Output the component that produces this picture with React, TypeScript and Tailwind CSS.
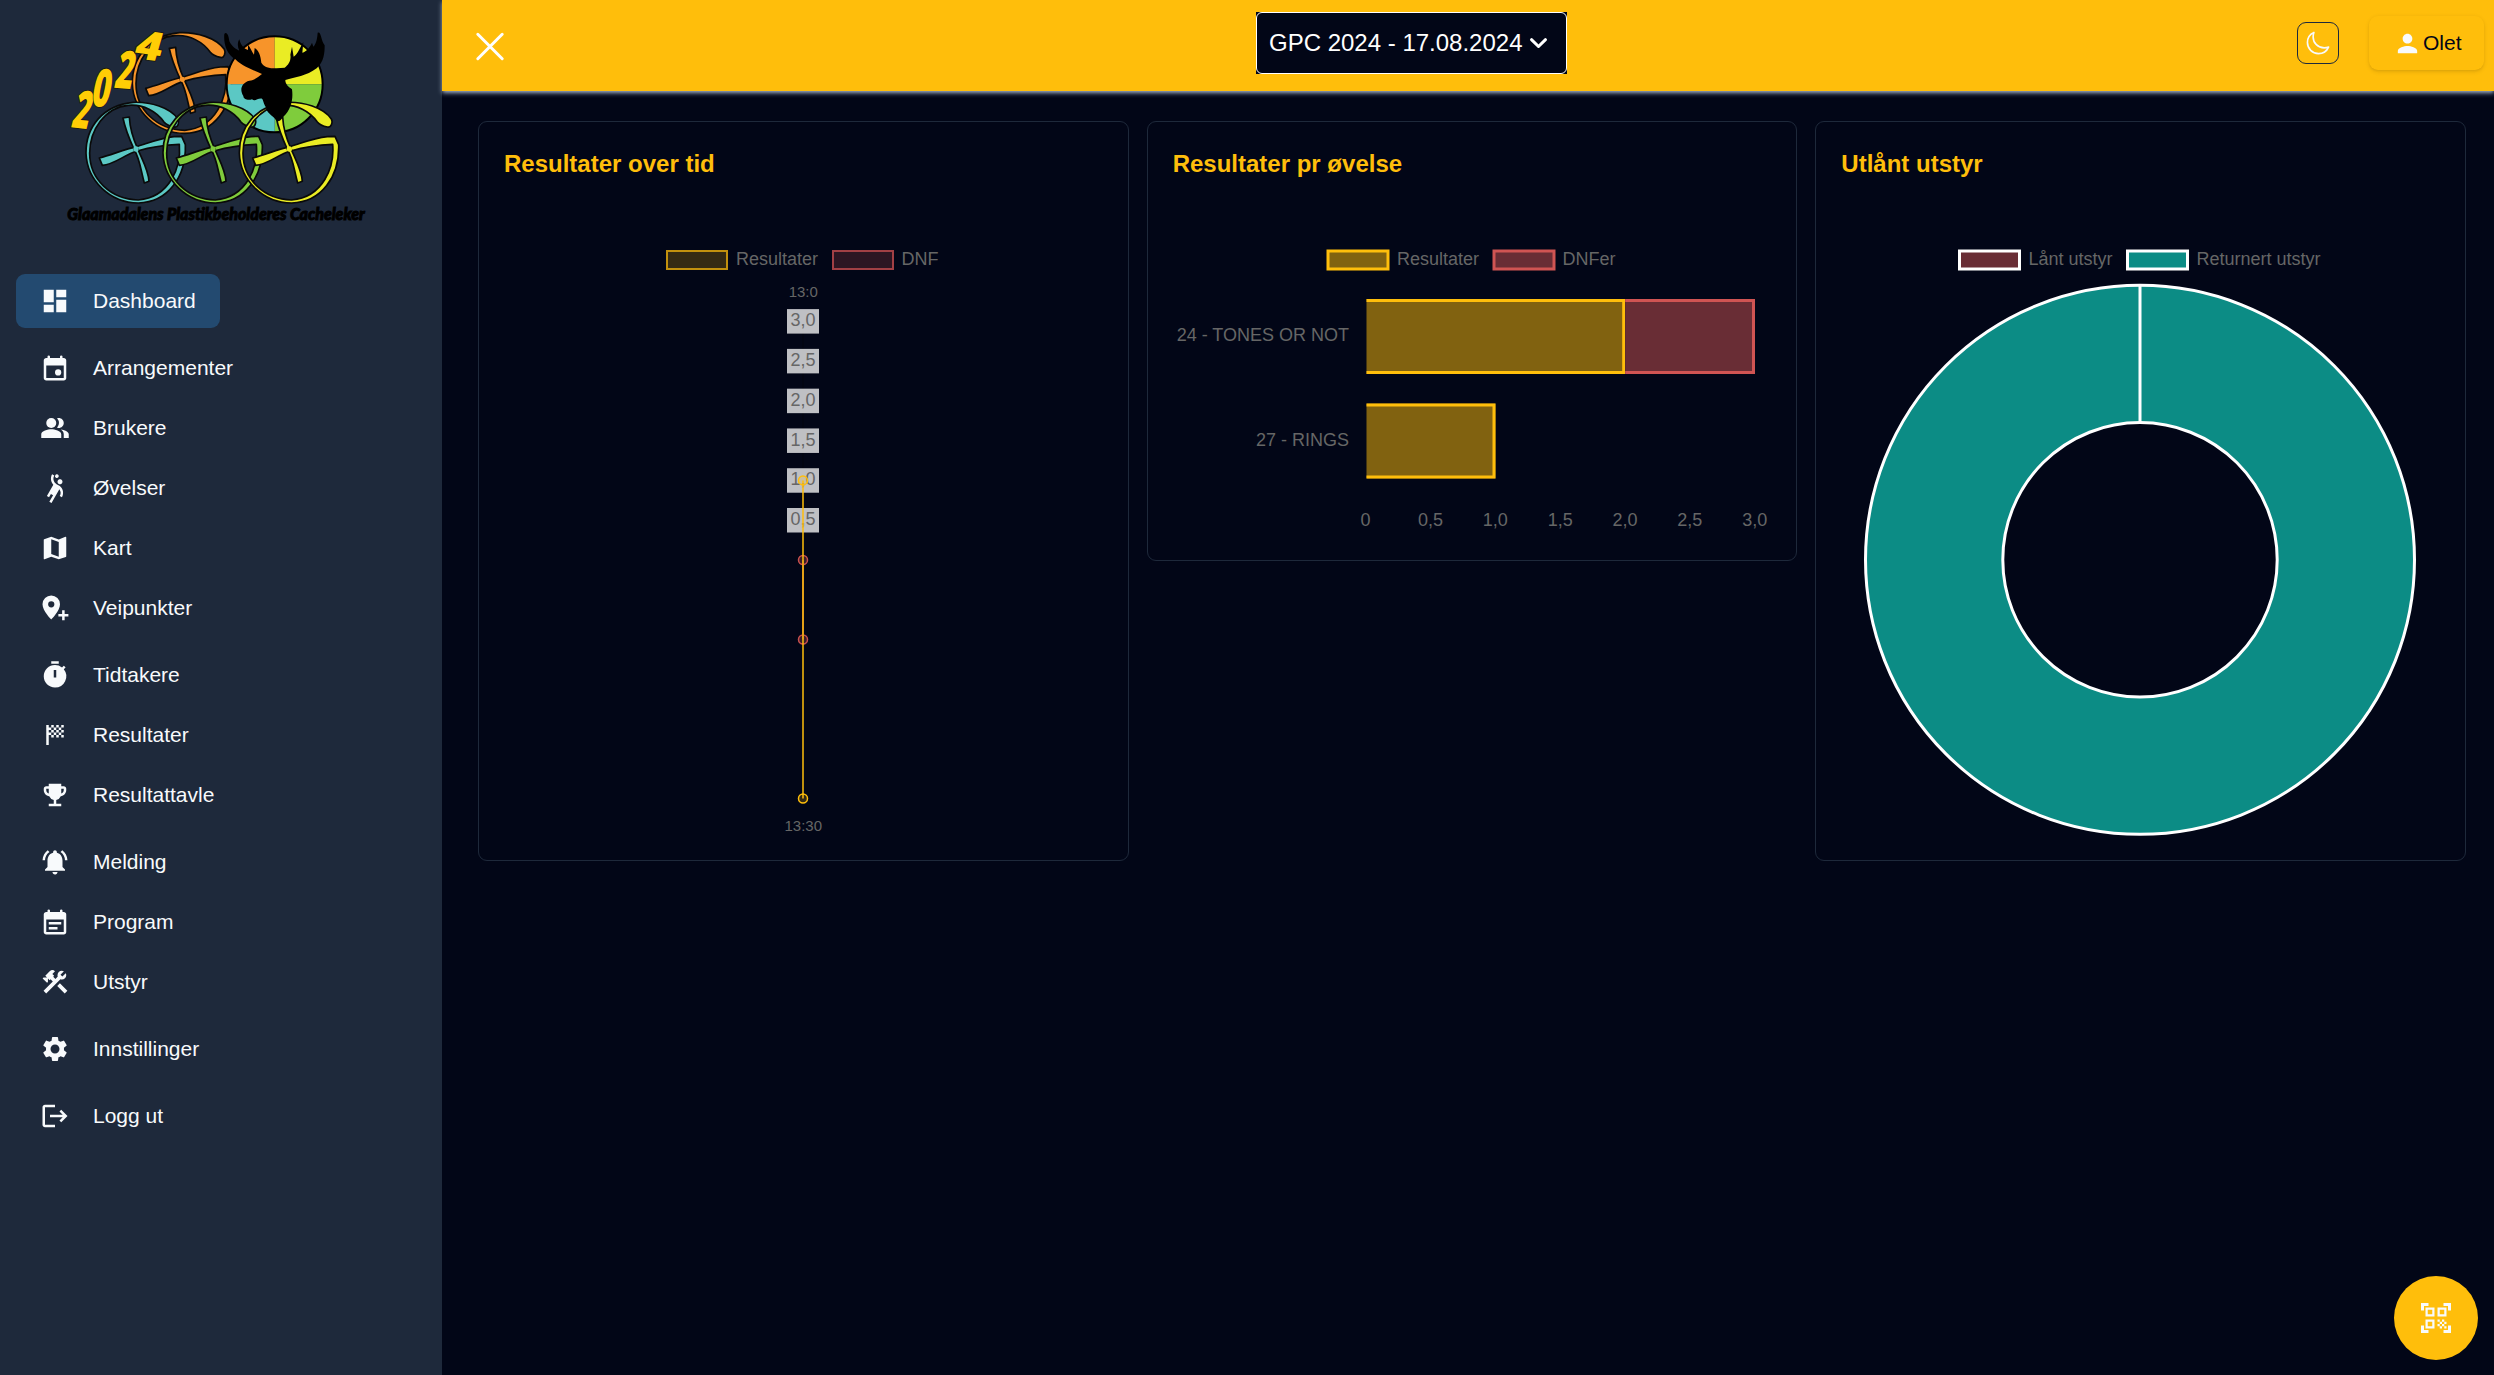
import React from "react";
import {
  MdConstruction,
  MdDashboard,
  MdEmojiEvents,
  MdLogout,
  MdMap,
  MdNotificationsActive,
  MdPeopleAlt,
  MdPerson,
  MdQrCodeScanner,
  MdSettings,
  MdSportsHandball,
  MdSportsScore,
  MdTimer,
} from "react-icons/md";

const ARIAL = '"Liberation Sans", Arial, sans-serif';

function EventIcon({ note = false }: { note?: boolean }) {
  return (
    <svg viewBox="0 0 24 24" width="30" height="30" fill="currentColor">
      <path
        fillRule="evenodd"
        d="M5 22q-.825 0-1.412-.587T3 20V6q0-.825.588-1.412T5 4h1V3q0-.425.288-.712T7 2t.713.288T8 3v1h8V3q0-.425.288-.712T17 2t.713.288T18 3v1h1q.825 0 1.413.588T21 6v14q0 .825-.587 1.413T19 22zm0-2h14V10H5z"
      />
      {note ? <path d="M7 12h10v2H7zM7 16h7v2H7z" /> : <circle cx="14.5" cy="15.5" r="2.5" />}
    </svg>
  );
}

function PinPlusIcon() {
  return (
    <svg viewBox="0 0 24 24" width="30" height="30" fill="currentColor">
      <path
        fillRule="evenodd"
        d="M9 2a7 7 0 0 0-7 7c0 5.2 7 12.2 7 12.2S16 14.200 16 9a7 7 0 0 0-7-7zm0 9.500a2.500 2.500 0 1 1 0-5 2.500 2.500 0 0 1 0 5z"
      />
      <path d="M17.700 13.800h2v3h3v2h-3v3h-2v-3h-3v-2h3z" />
    </svg>
  );
}

type Item = { label: string; icon: React.ReactNode; active?: boolean };

const groups: Item[][] = [
  [{ label: "Dashboard", icon: <MdDashboard size={30} />, active: true }],
  [
    { label: "Arrangementer", icon: <EventIcon /> },
    { label: "Brukere", icon: <MdPeopleAlt size={30} /> },
    { label: "Øvelser", icon: <MdSportsHandball size={30} /> },
    { label: "Kart", icon: <MdMap size={30} /> },
    { label: "Veipunkter", icon: <PinPlusIcon /> },
  ],
  [
    { label: "Tidtakere", icon: <MdTimer size={30} /> },
    { label: "Resultater", icon: <MdSportsScore size={30} /> },
    { label: "Resultattavle", icon: <MdEmojiEvents size={30} /> },
  ],
  [
    { label: "Melding", icon: <MdNotificationsActive size={30} /> },
    { label: "Program", icon: <EventIcon note /> },
    { label: "Utstyr", icon: <MdConstruction size={30} /> },
  ],
  [{ label: "Innstillinger", icon: <MdSettings size={30} /> }],
  [{ label: "Logg ut", icon: <MdLogout size={30} /> }],
];

const RING =
  "M372 321 C384 325 389 306 384 297 C360 262 300 245 250 247 C160 255 107 320 108 400 C111 482 180 549 265 549 C354 547 409 470 406 374 L395 349 L372 350 C330 354 294 370 260 380 C225 388 190 402 148 414 L157 436 C194 434 222 404 262 393 C300 382 340 375 388 373 C394 440 360 532 265 540 C182 538 119 478 119 400 C119 330 165 262 235 256 C280 252 320 275 342 306 C350 316 362 319 372 321 Z";
const STEM =
  "M219 294 L238 291 C240 330 252 362 263 386 C276 418 296 452 297 484 L283 489 C272 450 270 418 253 390 C242 366 226 330 219 294 Z";

function Letter({ x, y, color }: { x: number; y: number; color: string }) {
  return (
    <g transform={`translate(${x} ${y})`} fill={color} stroke="#0a0a0a" strokeWidth="5" strokeLinejoin="round">
      <path d={RING} />
      <path d={STEM} />
      <circle cx="258" cy="387" r="8" stroke="none" />
    </g>
  );
}

const DIGITS = [
  { c: "2", x: 61, y: 322, r: 6, s: 158, w: 52 },
  { c: "0", x: 119, y: 258, r: 3, s: 158, w: 56 },
  { c: "2", x: 190, y: 203, r: 4, s: 158, w: 54 },
  { c: "4", x: 248, y: 113, r: 8, s: 120, w: 80 },
];

function Logo() {
  return (
    <svg viewBox="0 0 990 660" width="330" height="220" className="overflow-visible">
      <Letter x={139} y={-209} color="#f7942a" />
      <g>
        <path d="M674 193 V49 A144 144 0 0 0 530 193 Z" fill="#f7942a" />
        <path d="M674 193 V49 A144 144 0 0 1 818 193 Z" fill="#eaec24" />
        <path d="M674 193 V337 A144 144 0 0 0 818 193 Z" fill="#7fcc3c" />
        <path d="M674 193 V337 A144 144 0 0 1 530 193 Z" fill="#5bc8c4" />
        <circle cx="674" cy="193" r="144" fill="none" stroke="#000" strokeWidth="6" />
      </g>
      <Letter x={0} y={0} color="#5bc8c4" />
      <Letter x={231} y={0} color="#7fcc3c" />
      <Letter x={460} y={0} color="#eaec24" />
      <path
        d="M636 162 C612 150 580 142 556 118 C530 104 520 70 523 42 C528 34 536 42 538 64 C546 80 558 88 568 92 C562 80 562 68 568 58 C572 74 580 86 594 90 L594 74 C602 84 606 96 612 104 L614 84 C626 90 632 108 634 128 C642 142 655 145 680 145 L704 143 C716 134 724 120 721 104 L726 80 L731 110 C744 102 750 82 760 66 L757 98 C770 94 780 82 786 68 L790 80 C800 70 802 52 803 38 C814 34 812 60 824 76 C824 100 822 125 800 145 C770 168 735 172 706 180 C706 194 716 200 726 208 C730 236 724 268 700 290 C690 306 682 306 678 300 C665 284 650 280 648 262 C640 250 640 240 636 236 C622 234 616 246 606 238 C594 242 580 238 580 228 C568 210 574 188 598 182 C614 180 624 172 636 162 Z"
        fill="#000"
      />
      {DIGITS.map((d, i) => (
        <text
          key={i}
          transform={`translate(${d.x} ${d.y}) rotate(${d.r}) skewX(-8)`}
          fontFamily='"Open Sans", "Liberation Sans", sans-serif'
          fontWeight="800"
          fontSize={d.s}
          textLength={d.w}
          lengthAdjust="spacingAndGlyphs"
          fill="#ffcd05"
          stroke="#1a1a10"
          strokeWidth="5"
          paintOrder="stroke"
        >
          {d.c}
        </text>
      ))}
      <text
        x="52"
        y="599"
        fontFamily='Lato, "Liberation Sans", sans-serif'
        fontWeight="900"
        fontStyle="italic"
        fontSize="52"
        textLength="892"
        lengthAdjust="spacingAndGlyphs"
        fill="#000"
        stroke="#000"
        strokeWidth="3"
      >
        Glaamadalens Plastikbeholderes Cacheleker
      </text>
    </svg>
  );
}

function Sidebar() {
  return (
    <aside className="flex w-[442px] shrink-0 flex-col bg-[#1e293b] pt-5">
      <div className="mb-[34px] ml-[50px]">
        <Logo />
      </div>
      <nav className="flex flex-col gap-[13px] pl-4">
        {groups.map((g, i) => (
          <div key={i} className="flex flex-col items-start gap-1.5">
            {g.map((it) => (
              <a
                key={it.label}
                className={`flex h-[54px] items-center rounded-[9px] pr-6 pl-[23.5px] text-[21px] text-slate-50 ${
                  it.active ? "bg-[#234a70]" : ""
                }`}
              >
                <span className="mr-[23.5px] pb-px">{it.icon}</span>
                {it.label}
              </a>
            ))}
          </div>
        ))}
      </nav>
    </aside>
  );
}

function Header() {
  return (
    <header className="relative grid h-[91px] grid-cols-3 bg-[#ffbe0b] shadow-[0_1.5px_4.5px_#94a3b8,0_1.5px_3px_-1.5px_#94a3b8]">
      <div className="pt-[31px] pl-[33px]">
        <svg width="31" height="31" viewBox="0 0 31 31" stroke="#fff" strokeWidth="3" strokeLinecap="round">
          <path d="M2.800 3.300 L27.200 27.700 M27.200 3.300 L2.800 27.700" />
        </svg>
      </div>
      <div className="flex justify-center pt-3">
        <div className="mr-[113px] h-[62px] w-[311px] bg-[#020617]">
          <div className="flex h-full items-center rounded-md border border-white pb-px pl-3 text-2xl whitespace-nowrap text-white">
            GPC 2024 - 17.08.2024
            <svg className="ml-1.5" width="19" height="19" viewBox="0 0 19 19" fill="none" stroke="#fff" strokeWidth="3" strokeLinecap="round" strokeLinejoin="round">
              <path d="M2.500 6.700 L9.500 13.500 L16.500 6.700" />
            </svg>
          </div>
        </div>
      </div>
      <div className="flex justify-end pt-4 pr-2.5">
        <div className="mt-1.5 mr-[30px] flex size-[42px] items-center justify-center rounded-[9px] border border-slate-800">
          <svg width="26" height="26" viewBox="0 0 512 512" fill="none" stroke="#f8fafc" strokeWidth="32" strokeLinejoin="round" strokeLinecap="round">
            <path d="M160 136c0-30.620 4.510-61.610 16-88C99.570 81.270 48 159.320 48 248c0 119.290 96.710 216 216 216 88.680 0 166.730-51.570 200-128-26.390 11.490-57.380 16-88 16-119.290 0-216-96.710-216-216z" />
          </svg>
        </div>
        <div className="flex h-[54px] w-[115px] items-center rounded-[9px] pl-6 text-[21px] text-slate-950 shadow-[0_1.5px_4.5px_rgba(0,0,0,0.1),0_1.5px_3px_-1.500px_rgba(0,0,0,0.1)]">
          <MdPerson size={29} color="#f8fafc" className="mr-px" />
          Olet
        </div>
      </div>
    </header>
  );
}

function Card({ title, children }: { title: string; children: React.ReactNode }) {
  return (
    <section className="rounded-[9px] border border-[#1e293b]">
      <h2 className="mt-[26px] ml-[25px] text-2xl leading-8 font-bold text-[#ffbe0b]">{title}</h2>
      {children}
    </section>
  );
}

type KeyProps = {
  x: number;
  tx: number;
  label: string;
  fill: string;
  stroke: string;
  w?: number;
};

function LegendKey({ x, tx, label, fill, stroke, w = 3 }: KeyProps) {
  return (
    <g>
      <rect x={x} y="71" width="60" height="18" fill={fill} stroke={stroke} strokeWidth={w} />
      <text x={tx} y="85" fill="#666">
        {label}
      </text>
    </g>
  );
}

/* The radial scale has a single axis, so both series collapse on one vertical line. */
function RadarChart() {
  const ticks = ["3,0", "2,5", "2,0", "1,5", "1,0", "0,5"];
  return (
    <svg width="649" height="680" viewBox="479 180 649 680" className="block" fontFamily={ARIAL} fontSize="18">
      <g transform="translate(0 180)">
        <LegendKey x={667} tx={736} label="Resultater" fill="#352a13" stroke="#c2900e" w={2} />
        <LegendKey x={833} tx={901.5} label="DNF" fill="#2d1623" stroke="#a24045" w={2} />
      </g>
      <text x="803.300" y="296.500" fontSize="15" textAnchor="middle" fill="#666">
        13:0
      </text>
      <text x="803.300" y="831" fontSize="15" textAnchor="middle" fill="#666">
        13:30
      </text>
      <path d="M803 321 V560" stroke="#02050f" />
      {ticks.map((t, i) => (
        <g key={t}>
          <rect x="787" y={309.1 + i * 39.78} width="32" height="24.500" fill="#fff" fillOpacity=".75" />
          <text x="803" y={326.3 + i * 39.78} textAnchor="middle" fill="#666">
            {t}
          </text>
        </g>
      ))}
      <g fill="#3a1c28" stroke="#c9504f" strokeWidth="1.500">
        <circle cx="803" cy="560" r="4.500" />
        <circle cx="803" cy="639.500" r="4.500" />
      </g>
      <g fill="#ffbe0b" fillOpacity=".2" stroke="#ffbe0b" strokeWidth="1.500">
        <circle cx="803" cy="480.400" r="4.500" />
        <circle cx="803" cy="798.500" r="4.500" />
      </g>
      <path d="M803 480.400 V798.500" stroke="#ffbe0b" strokeOpacity=".75" strokeWidth="2" />
      <path d="M803 560 V639.500" stroke="#e5a016" strokeWidth="2" />
    </svg>
  );
}

function BarChart() {
  const ticks = ["0", "0,5", "1,0", "1,5", "2,0", "2,5", "3,0"];
  return (
    <svg width="649" height="380" viewBox="1148 180 649 380" className="block" fontFamily={ARIAL} fontSize="18">
      <g transform="translate(0 180)">
        <LegendKey x={1328} tx={1397} label="Resultater" fill="#816210" stroke="#ffbe0b" />
        <LegendKey x={1494} tx={1562.5} label="DNFer" fill="#692d35" stroke="#d05453" />
      </g>
      <rect x="1366.500" y="299" width="258.500" height="75" fill="#816210" />
      <path d="M1366.500 300.500 H1623.700 V372.500 H1366.500" fill="none" stroke="#ffbe0b" strokeWidth="3" />
      <rect x="1625.200" y="299" width="129.800" height="75" fill="#692d35" />
      <path d="M1625.200 300.500 H1753.500 V372.500 H1625.200" fill="none" stroke="#d05453" strokeWidth="3" />
      <rect x="1366.500" y="403.500" width="129" height="75" fill="#816210" />
      <path d="M1366.500 405 H1494 V477 H1366.500" fill="none" stroke="#ffbe0b" strokeWidth="3" />
      <g fill="#666">
        <text x="1349" y="341" textAnchor="end">
          24 - TONES OR NOT
        </text>
        <text x="1349" y="446" textAnchor="end">
          27 - RINGS
        </text>
        {ticks.map((t, i) => (
          <text key={t} x={1365.6 + i * 64.85} y="526" textAnchor="middle">
            {t}
          </text>
        ))}
      </g>
    </svg>
  );
}

function DoughnutChart() {
  return (
    <svg width="649" height="680" viewBox="1816 180 649 680" className="block" fontFamily={ARIAL} fontSize="18">
      <g transform="translate(0 180)">
        <LegendKey x={1959.5} tx={2028.5} label="Lånt utstyr" fill="#692d35" stroke="#fff" />
        <LegendKey x={2127.5} tx={2196.500} label="Returnert utstyr" fill="#0c8c85" stroke="#fff" />
      </g>
      <circle cx="2140" cy="559.800" r="205.900" fill="none" stroke="#0c8c85" strokeWidth="137.200" />
      <g fill="none" stroke="#fff" strokeWidth="3">
        <circle cx="2140" cy="559.800" r="274.500" />
        <circle cx="2140" cy="559.800" r="137.200" />
        <path d="M2140 285.300 V422.600" />
      </g>
    </svg>
  );
}

export default function App() {
  return (
    <div className="flex h-[1375px] w-[2494px] overflow-hidden bg-[#020617] font-['Liberation_Sans',Arial,sans-serif]">
      <Sidebar />
      <main className="relative flex flex-1 flex-col">
        <Header />
        <div className="mt-[30px] mr-7 ml-9 grid grid-cols-3 items-start gap-[18px]">
          <Card title="Resultater over tid">
            <RadarChart />
          </Card>
          <Card title="Resultater pr øvelse">
            <BarChart />
          </Card>
          <Card title="Utlånt utstyr">
            <DoughnutChart />
          </Card>
        </div>
        <button className="absolute right-4 bottom-[15px] flex size-[84px] items-center justify-center rounded-full bg-[#ffbe0b] text-slate-50">
          <MdQrCodeScanner size={36} />
        </button>
      </main>
    </div>
  );
}
